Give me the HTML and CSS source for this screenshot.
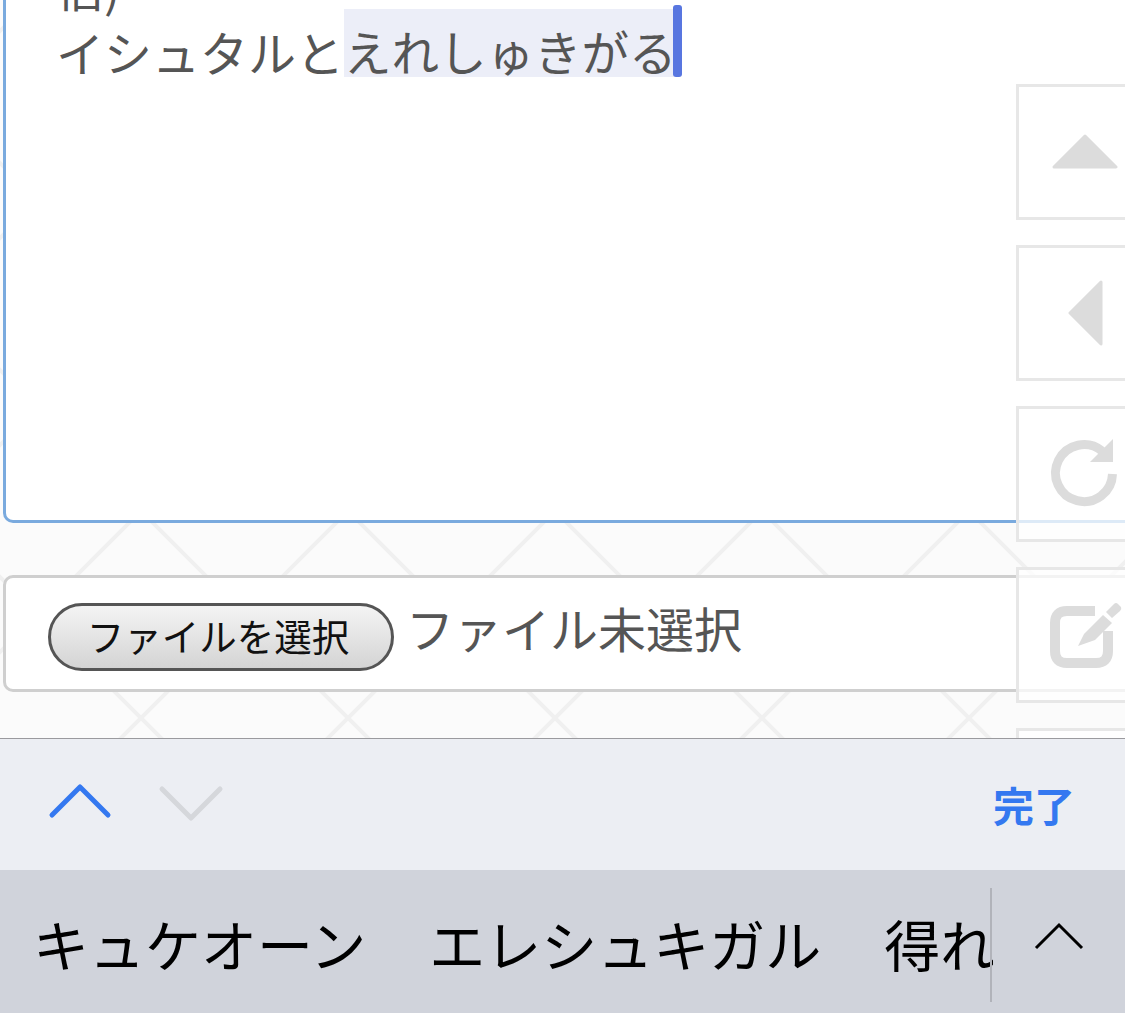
FILE: index.html
```html
<!DOCTYPE html>
<html lang="ja">
<head>
<meta charset="utf-8">
<title>入力</title>
<link rel="stylesheet" href="styles.css">
</head>
<body>
<main class="page">
  <div class="editor">
    <div class="line line-prev">信)</div>
    <div class="line">イシュタルと<span class="selection">えれしゅきがる<i class="caret"></i></span></div>
  </div>
  <div class="file-row">
    <span class="file-button">ファイルを選択</span>
    <span class="file-name">ファイル未選択</span>
  </div>
  <div class="toolbar">
    <svg class="chev" width="64" height="40" viewBox="0 0 64 40"><path class="chev-on" d="M4 36 L32 8 L60 36"/></svg>
    <svg class="chev chev-next free" width="64" height="40" viewBox="0 0 64 40"><path class="chev-off" d="M3 10 L32 39 L61 10"/></svg>
    <span class="done">完了</span>
  </div>
  <div class="candidates">
    <div class="candidate-list">
      <span class="cand">キュケオーン</span>
      <span class="cand">エレシュキガル</span>
      <span class="cand">得れ</span>
    </div>
    <div class="expand">
      <svg width="50" height="28" viewBox="0 0 50 28"><path class="expand-path" d="M2 26 L25 3 L48 26"/></svg>
    </div>
  </div>
</main>
<aside class="side-tools">
  <div class="tool">
    <svg width="66" height="36" viewBox="0 0 66 36"><path class="glyph" d="M33 2 L64 33 H2 Z"/></svg>
  </div>
  <div class="tool tool-back">
    <svg width="36" height="66" viewBox="0 0 36 66"><path class="glyph" d="M33 2 V64 L2 33 Z"/></svg>
  </div>
  <div class="tool">
    <svg class="free" width="66" height="66" viewBox="0 0 66 66"><path class="ring" d="M60.500 33 A28.500 28.500 0 1 1 50 10"/><path class="solid" d="M61 -2 V21 H38 Z"/></svg>
  </div>
  <div class="tool">
    <svg class="free" width="70" height="66" viewBox="0 0 70 66"><path class="frame" d="M43 9 H15 Q3 9 3 21 V49 Q3 61 15 61 H44 Q56 61 56 49 V29"/><path class="solid" d="M26 44 L32 32 L51 13 L60 21 L43 38 Z M54 10 L62 2 Q64 0 66 2 L69 5 Q70 7 68 9 L60 16 Z"/></svg>
  </div>
  <div class="tool"></div>
</aside>
</body>
</html>
```
FILE: styles.css
```css
* { box-sizing: border-box; }
html, body { margin: 0; height: 1013px; overflow: hidden; }
body {
  font-family: "Noto Sans CJK JP", "Noto Sans", sans-serif;
  color: #555;
  background-color: #fbfbfb;
  background-image: url("data:image/svg+xml;utf8,<svg xmlns='http://www.w3.org/2000/svg' width='207' height='207'><path d='M0 0 L207 207 M207 0 L0 207' stroke='%23f0f0f0' stroke-width='4' fill='none'/></svg>");
  background-position: 141px 97px;
  position: relative;
}
.page { display: flex; flex-direction: column; height: 1013px; width: 1125px; overflow: hidden; }
.editor {
  flex: none;
  width: 1200px;
  height: 523px;
  margin-left: 3px;
  background: #fff;
  border: 3px solid #7aaade;
  border-top: 0;
  border-radius: 0 0 10px 10px;
  padding: 0 0 0 50px;
  overflow: hidden;
}
.line { font-size: 48px; line-height: 84px; white-space: nowrap; height: 68px; margin-top: 9px; }
.line-prev { margin-top: -56px; height: 56px; }
.selection { position: relative; display: inline-block; background: #eceef8; width: 330px; height: 68px; vertical-align: top; font-size: 47.500px; }
.caret { position: absolute; right: -8px; top: -4px; width: 9px; height: 72px; border-radius: 3px; background: #5876e0; }
.file-row {
  flex: none;
  display: flex;
  align-items: center;
  width: 1200px;
  height: 117px;
  margin: 52px 0 0 3px;
  padding-left: 42px;
  background: #fff;
  border: 3px solid #cfcfcf;
  border-radius: 10px;
}
.file-button {
  width: 346px;
  height: 68px;
  border: 3px solid #555;
  border-radius: 35px;
  background: linear-gradient(#f4f4f4, #d4d4d4);
  color: #111;
  font-size: 37.500px;
  line-height: 58px;
  text-align: center;
  padding-right: 6px;
  margin-top: 6px;
}
.file-name { font-size: 48px; margin: -14px 0 0 12px; line-height: 60px; }
.toolbar {
  flex: none;
  position: relative;
  z-index: 2;
  display: flex;
  align-items: center;
  height: 132px;
  margin-top: 46px;
  padding: 0 50px 0 48px;
  background: #eceef3;
  border-top: 1px solid #9a9a9e;
}
.chev { display: block; margin-top: -11px; }
.chev-next { margin-left: 47px; }
.chev-on, .chev-off { fill: none; stroke-width: 5px; stroke-linecap: round; stroke-linejoin: round; }
.chev-on { stroke: #3478f0; }
.chev-off { stroke: #d5d7db; }
.done { margin-left: auto; color: #3478f0; font-size: 41px; font-weight: 700; line-height: 50px; margin-top: -2px; }
.candidates { flex: none; position: relative; z-index: 2; display: flex; height: 143px; background: #d0d3db; color: #000; overflow: hidden; }
.candidate-list {
  flex: none;
  width: 993px;
  padding: 28px 0 0 33px;
  display: flex;
  gap: 63px;
  font-size: 56px;
  white-space: nowrap;
  overflow: hidden;
  line-height: 90px;
}
.expand {
  flex: 1;
  position: relative;
  display: flex;
  justify-content: center;
  padding: 52px 0 0 0;
}
.expand::before {
  content: "";
  position: absolute;
  left: -3px;
  top: 18px;
  width: 2px;
  height: 114px;
  background: #b1b3ba;
}
.expand svg { display: block; }
.expand-path { fill: none; stroke: #000; stroke-width: 3px; }
.side-tools {
  position: absolute;
  left: 1016px;
  top: 84px;
  width: 130px;
  display: flex;
  flex-direction: column;
  gap: 25px;
}
.tool {
  flex: none;
  height: 136px;
  display: flex;
  align-items: center;
  padding-left: 33px;
  background: rgba(255, 255, 255, 0.75);
  border: 3px solid #e7e7e7;
}
.tool-back { padding-left: 49px; }
.free { overflow: visible; }
.glyph, .solid { fill: #dcdcdc; stroke: none; }
.glyph { stroke: #dcdcdc; stroke-width: 3px; stroke-linejoin: round; }
.ring, .frame { fill: none; stroke: #dcdcdc; stroke-width: 9px; }
.frame { stroke-width: 10px; }
```
